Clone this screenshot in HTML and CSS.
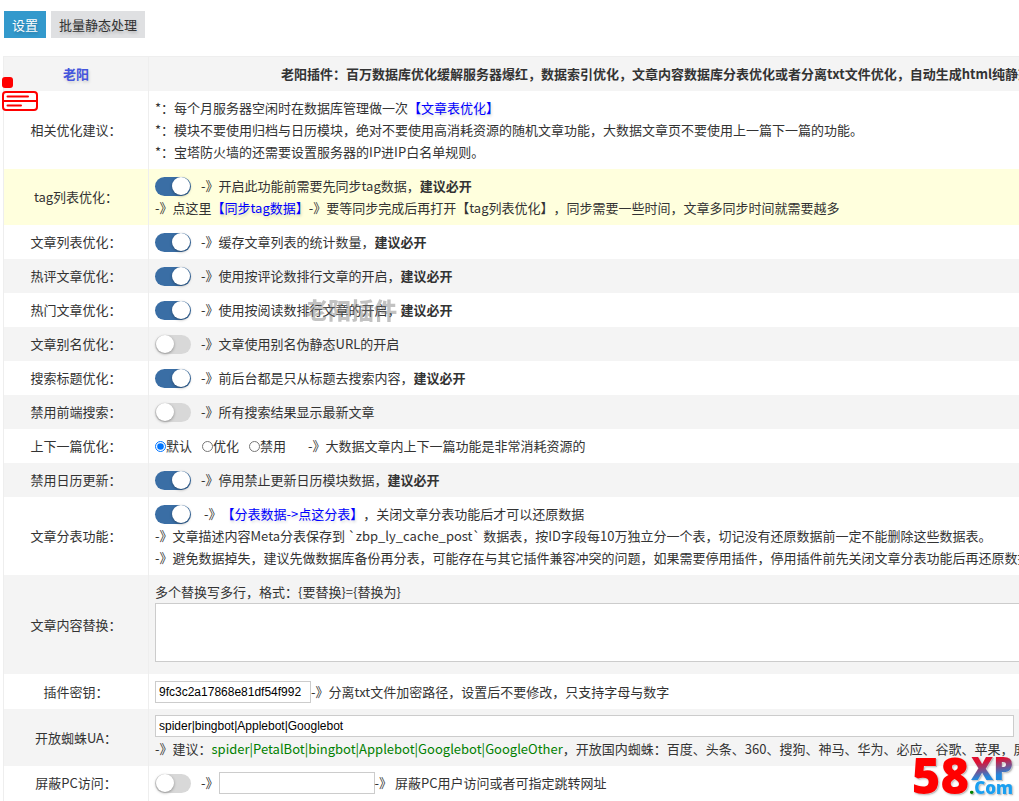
FILE: index.html
```html
<!DOCTYPE html>
<html lang="zh-CN">
<head>
<meta charset="utf-8">
<title>老阳插件</title>
<link rel="stylesheet" href="styles.css">
</head>
<body>
<nav class="tabs">
  <a class="tab tab-active" href="#settings">设置</a>
  <a class="tab" href="#static">批量静态处理</a>
</nav>
<form class="panel" id="settings">
<table class="grid">
  <tr><th class="name brand">老阳</th><th class="intro">老阳插件：百万数据库优化缓解服务器爆红，数据索引优化，文章内容数据库分表优化或者分离txt文件优化，自动生成html纯静态化</th></tr>
  <tr>
    <td class="name">相关优化建议：</td>
    <td>
      <div class="line">*：每个月服务器空闲时在数据库管理做一次<a class="link" href="#opt">【文章表优化】</a></div>
      <div class="line">*：模块不要使用归档与日历模块，绝对不要使用高消耗资源的随机文章功能，大数据文章页不要使用上一篇下一篇的功能。</div>
      <div class="line">*：宝塔防火墙的还需要设置服务器的IP进IP白名单规则。</div>
    </td>
  </tr>
  <tr class="highlight">
    <td class="name"><label for="tag">tag列表优化：</label></td>
    <td>
      <div class="line"><input class="switch" type="checkbox" id="tag" checked><span>-》开启此功能前需要先同步tag数据，<b>建议必开</b></span></div>
      <div class="line">-》点这里<a class="link" href="#sync">【同步tag数据】</a>-》要等同步完成后再打开【tag列表优化】，同步需要一些时间，文章多同步时间就需要越多</div>
    </td>
  </tr>
  <tr><td class="name"><label for="list">文章列表优化：</label></td><td><div class="line"><input class="switch" type="checkbox" id="list" checked><span>-》缓存文章列表的统计数量，<b>建议必开</b></span></div></td></tr>
  <tr><td class="name"><label for="comm">热评文章优化：</label></td><td><div class="line"><input class="switch" type="checkbox" id="comm" checked><span>-》使用按评论数排行文章的开启，<b>建议必开</b></span></div></td></tr>
  <tr><td class="name"><label for="hot">热门文章优化：</label></td><td><div class="line"><input class="switch" type="checkbox" id="hot" checked><span>-》使用按阅读数排行文章的开启，<b>建议必开</b></span></div></td></tr>
  <tr><td class="name"><label for="alias">文章别名优化：</label></td><td><div class="line"><input class="switch" type="checkbox" id="alias"><span>-》文章使用别名伪静态URL的开启</span></div></td></tr>
  <tr><td class="name"><label for="title">搜索标题优化：</label></td><td><div class="line"><input class="switch" type="checkbox" id="title" checked><span>-》前后台都是只从标题去搜索内容，<b>建议必开</b></span></div></td></tr>
  <tr><td class="name"><label for="nosearch">禁用前端搜索：</label></td><td><div class="line"><input class="switch" type="checkbox" id="nosearch"><span>-》所有搜索结果显示最新文章</span></div></td></tr>
  <tr>
    <td class="name">上下一篇优化：</td>
    <td><div class="line choices">
      <label class="choice"><input type="radio" name="prev" checked>默认</label>
      <label class="choice"><input type="radio" name="prev">优化</label>
      <label class="choice"><input type="radio" name="prev">禁用</label>
      <span class="note">-》大数据文章内上下一篇功能是非常消耗资源的</span>
    </div></td>
  </tr>
  <tr><td class="name"><label for="cal">禁用日历更新：</label></td><td><div class="line"><input class="switch" type="checkbox" id="cal" checked><span>-》停用禁止更新日历模块数据，<b>建议必开</b></span></div></td></tr>
  <tr>
    <td class="name"><label for="split">文章分表功能：</label></td>
    <td>
      <div class="line"><input class="switch" type="checkbox" id="split" checked><span>&nbsp;-》<a class="link" href="#split-data">【分表数据-&gt;点这分表】</a>，关闭文章分表功能后才可以还原数据</span></div>
      <div class="line">-》文章描述内容Meta分表保存到 `zbp_ly_cache_post` 数据表，按ID字段每10万独立分一个表，切记没有还原数据前一定不能删除这些数据表。</div>
      <div class="line">-》避免数据掉失，建议先做数据库备份再分表，可能存在与其它插件兼容冲突的问题，如果需要停用插件，停用插件前先关闭文章分表功能后再还原数据。</div>
    </td>
  </tr>
  <tr>
    <td class="name"><label for="replace">文章内容替换：</label></td>
    <td>
      <div class="line">多个替换写多行，格式：{要替换}={替换为}</div>
      <textarea class="field area" id="replace"></textarea>
    </td>
  </tr>
  <tr class="tall">
    <td class="name"><label for="key">插件密钥：</label></td>
    <td><div class="line"><input class="field short" type="text" id="key" value="9fc3c2a17868e81df54f992"><span>-》分离txt文件加密路径，设置后不要修改，只支持字母与数字</span></div></td>
  </tr>
  <tr>
    <td class="name"><label for="ua">开放蜘蛛UA：</label></td>
    <td>
      <input class="field wide" type="text" id="ua" value="spider|bingbot|Applebot|Googlebot">
      <div class="line">-》建议：<span class="agents">spider|PetalBot|bingbot|Applebot|Googlebot|GoogleOther</span>，开放国内蜘蛛：百度、头条、360、搜狗、神马、华为、必应、谷歌、苹果，屏蔽</div>
    </td>
  </tr>
  <tr class="tall">
    <td class="name"><label for="pc">屏蔽PC访问：</label></td>
    <td><div class="line"><input class="switch" type="checkbox" id="pc"><span>-》</span><input class="field short" type="text" aria-label="跳转网址"><span>-》 屏蔽PC用户访问或者可指定跳转网址</span></div></td>
  </tr>
</table>
</form>

<svg class="card-icon" viewBox="0 0 36 34" aria-hidden="true">
  <rect x="0" y="0" width="11" height="11" rx="3" fill="#f00"/>
  <g fill="none" stroke="#f00" stroke-width="2" stroke-linecap="round">
    <rect x="1" y="15" width="34" height="18" rx="3"/>
    <path d="M1 24H35M5.500 19.500H26M5.500 28.500H19"/>
  </g>
</svg>
<div class="watermark">老阳插件</div>
<div class="logo"><span class="logo-num">58</span><span class="logo-side"><span class="logo-xp">XP</span><span class="logo-com"><span class="logo-dot">.</span>Com</span></span></div>
</body>
</html>
```
FILE: styles.css
```css
* { box-sizing: border-box; }
html { overflow: hidden; }
body {
  margin: 0;
  padding-top: 11px;
  overflow: hidden;
  background: #fff;
  color: #333;
  font: 13px/22px "Noto Sans CJK SC", "Open Sans", sans-serif;
  text-spacing-trim: space-all;
}
.tabs {
  display: flex;
  gap: 5px;
  padding-left: 4px;
  margin-bottom: 18px;
}
.tab {
  height: 27px;
  padding: 0 8px;
  line-height: 27px;
  background: #dfe0e2;
  color: #333;
  text-decoration: none;
  text-shadow: 1px 2px 3px rgba(0, 0, 0, .2);
}
.tab-active { background: #3399cc; color: #fff; }
.panel { margin: 0 0 0 3px; }
.grid {
  min-width: 110vw;
  border-collapse: collapse;
  border: 1px solid #eee;
}
.grid td, .grid th { padding: 6px; white-space: nowrap; text-align: left; }
.grid tr:nth-child(odd) { background: #f4f4f4; }
.grid tr.highlight { background: #ffffdd; }
.grid .name { width: 145px; border-right: 1px solid #eee; text-align: center; }
.grid .brand { color: #4455dd; text-shadow: 1px 2px 3px rgba(0, 0, 0, .15); }
.grid .intro { padding-left: 132px; }
.tall { height: 35px; }
.line { display: flex; align-items: center; height: 22px; white-space: pre; }
.link { color: #00f; text-decoration: none; text-shadow: 1px 2px 3px rgba(0, 0, 0, .15); }
.agents { color: #008000; }

.switch {
  appearance: none;
  width: 36px;
  height: 19px;
  margin: 0 10px 0 0;
  border-radius: 10px;
  background: #d8d8d8;
}
.switch::before {
  content: "";
  display: block;
  width: 18px;
  height: 18px;
  margin-left: 1px;
  border-radius: 50%;
  background: #fff;
  box-shadow: 0 1px 3px rgba(0, 0, 0, .35);
}
.switch:checked { background: #3a6ea5; }
.switch:checked::before { margin-left: 17px; }

.choices { gap: 10px; }
.choice { display: flex; align-items: center; }
.choice input { width: 11px; height: 11px; margin: 0; }
.note { margin-left: 12px; }

.field {
  display: block;
  height: 22px;
  margin: 0;
  padding: 0 3px;
  border: 1px solid #ccc;
  border-radius: 0;
  background: #fff;
  color: #000;
  font: 12px "Liberation Sans", sans-serif;
}
.short { width: 156px; }
.wide { width: calc(100vw - 160px); margin-bottom: 1px; }
.area { width: 100%; height: 59px; margin-bottom: 6px; resize: none; }

.card-icon { position: fixed; left: 2px; top: 77px; width: 36px; height: 34px; }
.watermark {
  position: fixed;
  left: 305px;
  top: 296px;
  color: rgba(120, 120, 120, .45);
  font: 900 23px/26px "Noto Sans CJK SC", sans-serif;
}
.logo {
  position: fixed;
  right: 6px;
  bottom: 6px;
  display: flex;
  align-items: center;
  height: 40px;
  font-family: "Open Sans", sans-serif;
  font-weight: 800;
  filter: drop-shadow(0 0 1px #fff) drop-shadow(1px 1px 0 rgba(0, 0, 0, .3));
}
.logo-num { color: #f00; font-size: 49px; line-height: 40px; }
.logo-side { display: flex; flex-direction: column; align-items: flex-end; }
.logo-xp {
  background: linear-gradient(170deg, #e01030 25%, #2288dd 75%);
  background-clip: text;
  color: transparent;
  font-size: 31px;
  line-height: 26px;
}
.logo-com { color: #1a9ff0; font-size: 17px; line-height: 14px; }
.logo-dot { color: #008000; }
```
